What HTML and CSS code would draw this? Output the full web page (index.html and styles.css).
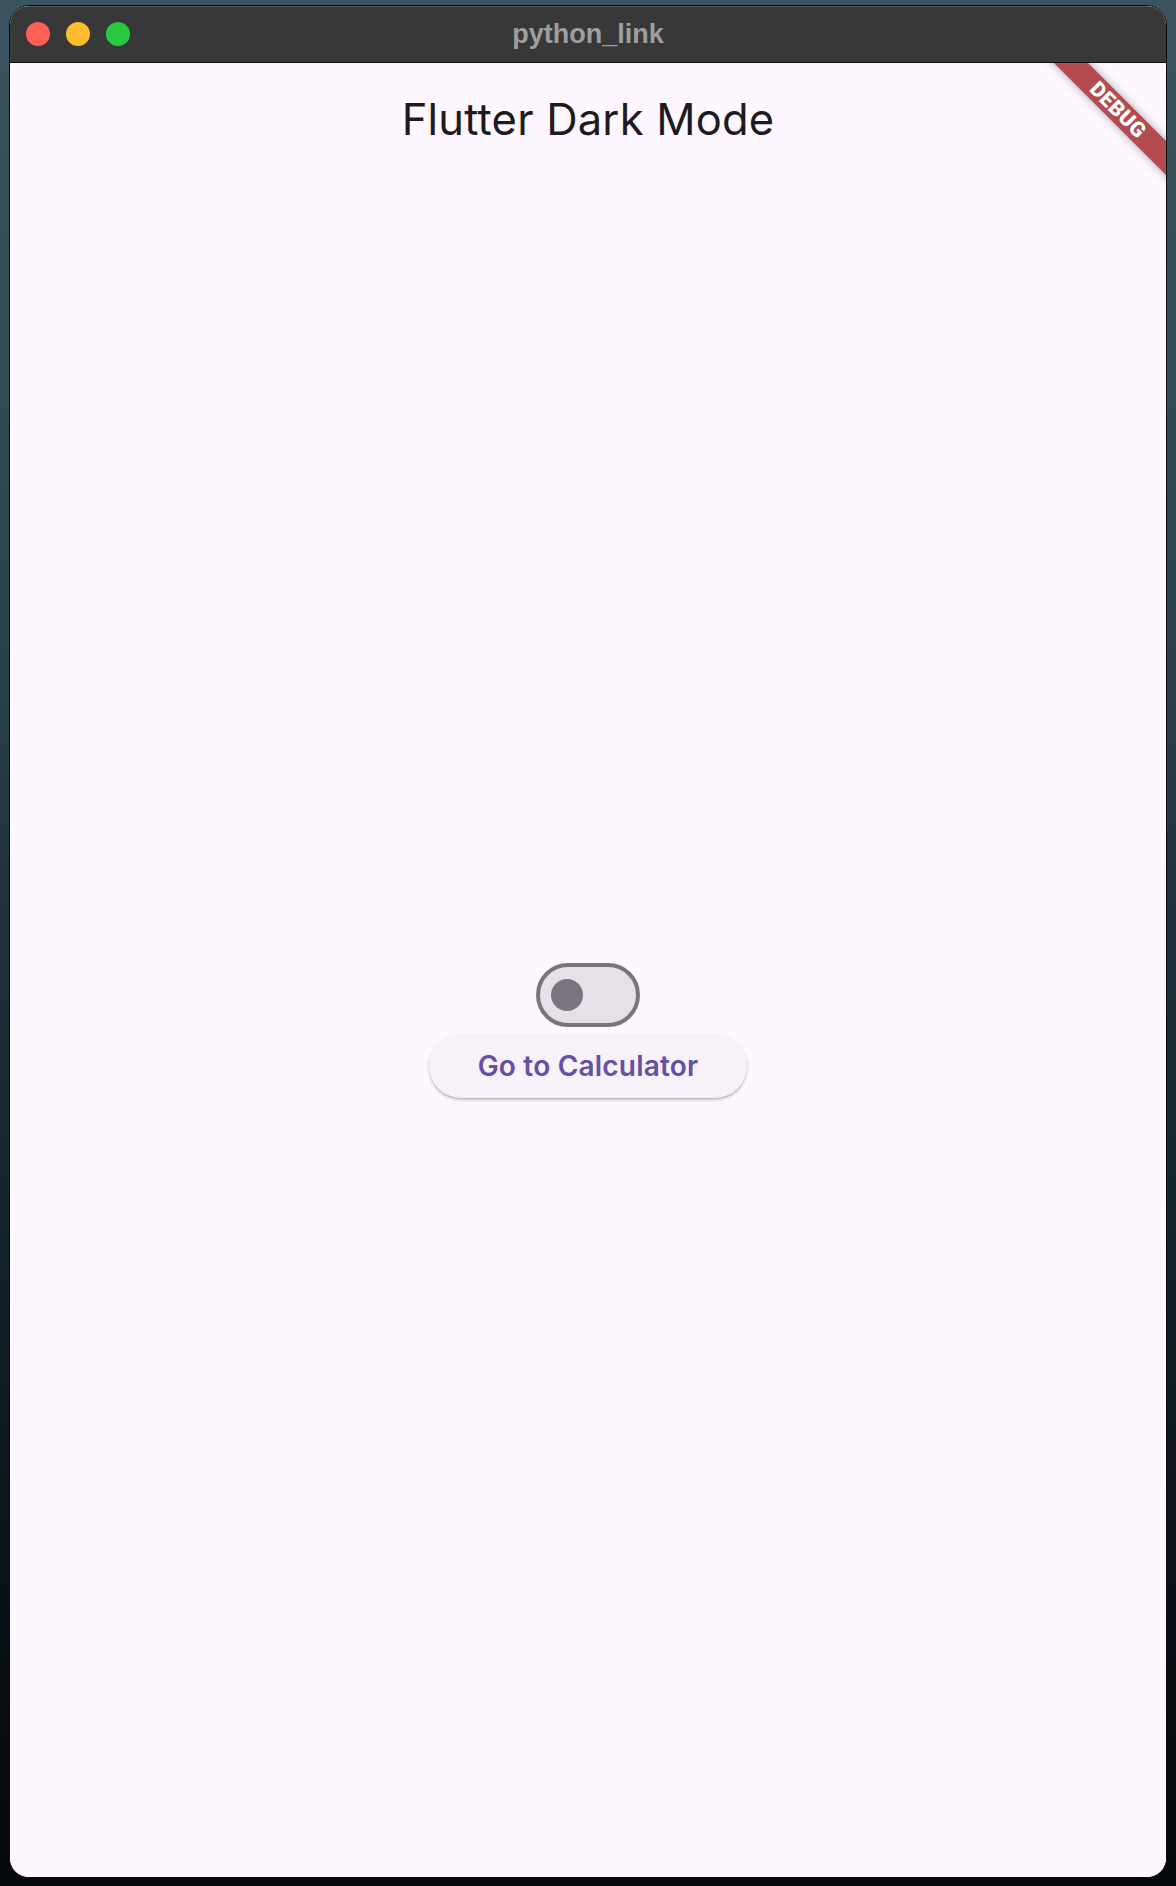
FILE: index.html
```html
<!DOCTYPE html>
<html>
<head>
<meta charset="utf-8">
<title>python_link</title>
<link rel="stylesheet" href="styles.css">
</head>
<body>
<div class="window">
  <div class="titlebar">
    <div class="lights">
      <span class="light red"></span>
      <span class="light yellow"></span>
      <span class="light green"></span>
    </div>
    <div class="wtitle">python_link</div>
    <div></div>
  </div>
  <div class="content">
    <header class="appbar"><h1 class="apptitle">Flutter Dark Mode</h1></header>
    <main class="body">
      <div class="switch"><span class="thumb"></span></div>
      <button class="btn">Go to Calculator</button>
    </main>
    <div class="debug">DEBUG</div>
  </div>
</div>
</body>
</html>
```

FILE: styles.css
```css
html, body {
  margin: 0;
  padding: 0;
}
body {
  width: 1176px;
  height: 1886px;
  overflow: hidden;
  background: linear-gradient(180deg, #3a5560 0%, #2d4550 30%, #1b2c35 55%, #0c151b 80%, #05080a 100%);
  font-family: "Liberation Sans", Arial, sans-serif;
}
.window {
  margin: 5px 0 0 9px;
  width: 1158px;
  height: 1873px;
  box-sizing: border-box;
  border: 1px solid #0b0b0b;
  border-radius: 20px;
  overflow: hidden;
  display: flex;
  flex-direction: column;
  background: #fef7ff;
}
.titlebar {
  height: 56px;
  flex: none;
  background: #373837;
  border-bottom: 1px solid #0f0f0f;
  box-shadow: inset 0 1px 0 rgba(255,255,255,0.18);
  display: grid;
  grid-template-columns: 1fr auto 1fr;
  align-items: center;
}
.lights {
  display: flex;
  gap: 16px;
  padding-left: 16px;
  padding-bottom: 2px;
}
.light {
  width: 24px;
  height: 24px;
  border-radius: 50%;
  display: block;
}
.red { background: #fe5f57; }
.yellow { background: #febc2e; }
.green { background: #28c840; }
.wtitle {
  color: #9e9e9e;
  font-weight: bold;
  font-size: 27px;
  line-height: 56px;
  padding-bottom: 2px;
}
.content {
  position: relative;
  flex: 1;
  display: flex;
  flex-direction: column;
  overflow: hidden;
  background: #fef7ff;
}
.appbar {
  height: 112px;
  flex: none;
  display: flex;
  justify-content: center;
  align-items: center;
}
.apptitle {
  margin: 0;
  font-family: Inter, "Noto Sans", sans-serif;
  font-weight: 400;
  font-size: 43.5px;
  color: #1d1b20;
  letter-spacing: 0.2px;
}
.body {
  flex: 1;
  display: flex;
  flex-direction: column;
  align-items: center;
  justify-content: center;
  padding-top: 8px;
  gap: 7px;
}
.switch {
  width: 104px;
  height: 64px;
  box-sizing: border-box;
  border: 4px solid #79747e;
  border-radius: 32px;
  background: #e6e0e9;
  display: flex;
  align-items: center;
  padding-left: 11px;
}
.thumb {
  width: 32px;
  height: 32px;
  border-radius: 50%;
  background: #79747e;
  display: block;
}
.btn {
  width: 318px;
  height: 64px;
  border: none;
  border-radius: 32px;
  background: #f7f2fa;
  box-shadow: 0 2px 3px rgba(0,0,0,0.22), 0 1px 1px rgba(0,0,0,0.08);
  color: #6750a4;
  font-family: Inter, "Noto Sans", sans-serif;
  font-weight: 600;
  font-size: 28px;
  letter-spacing: 0.2px;
  padding: 0;
  margin: 0;
}
.debug {
  position: absolute;
  left: 958px;
  top: 35px;
  width: 300px;
  height: 24px;
  line-height: 24px;
  background: #b44b51;
  color: #fff;
  font-family: Roboto, "Liberation Sans", sans-serif;
  font-weight: 900;
  font-size: 21px;
  letter-spacing: 0.5px;
  text-align: center;
  transform: rotate(45deg);
  box-shadow: 0 0 8px rgba(0,0,0,0.35);
}
```
